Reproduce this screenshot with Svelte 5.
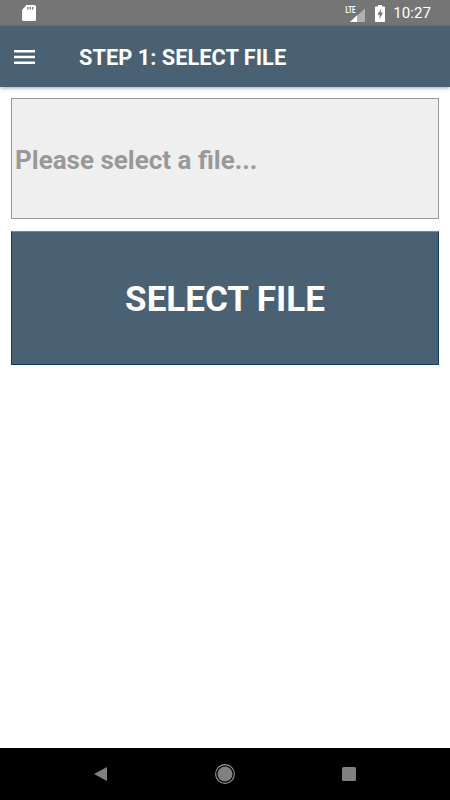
<script>
  let title = 'STEP 1: SELECT FILE';
  let placeholder = 'Please select a file...';
  let buttonLabel = 'SELECT FILE';
</script>

<div class="screen">
  <div class="status-bar">
    <svg width="14" height="16" viewBox="0 0 14 16">
      <path d="M4.5 0H12.5a1.5 1.5 0 0 1 1.5 1.5v13a1.5 1.5 0 0 1-1.500 1.500H1.500A1.500 1.500 0 0 1 0 14.500V5z" fill="#fff" />
      <path d="M5.200 2h1.300v2.600H5.200zM7.600 2h1.300v2.600H7.600zM10 2h1.300v2.600H10z" fill="#757575" />
    </svg>
    <div class="status-right">
      <svg width="21" height="17" viewBox="0 0 21 17">
        <path d="M20 3.500V17H5z" fill="#b0b0b0" />
        <path d="M12 10.200V17H5z" fill="#fff" />
        <text x="0.500" y="7.500" class="lte" textLength="10" lengthAdjust="spacingAndGlyphs">LTE</text>
      </svg>
      <svg class="battery" width="10" height="17" viewBox="0 0 10 17">
        <path d="M3 0h4v1.500h2.200a.8.8 0 0 1 .8.8v13.900a.8.8 0 0 1-.8.8H.8a.8.8 0 0 1-.8-.8V2.300a.8.8 0 0 1 .8-.8H3z" fill="#fff" />
        <path d="M6.200 3.500 2.400 9.800h2.200v4.200L8 7.600H5.600z" fill="#757575" />
      </svg>
      <span class="clock">10:27</span>
    </div>
  </div>

  <header class="toolbar">
    <svg width="21" height="14" viewBox="0 0 21 14">
      <path d="M0 1.300h21M0 7h21M0 12.700h21" stroke="#fff" stroke-width="2.500" />
    </svg>
    <h1>{title}</h1>
  </header>

  <main class="content">
    <div class="file-box"><span>{placeholder}</span></div>
    <button class="select-btn"><span>{buttonLabel}</span></button>
  </main>

  <nav class="nav-bar">
    <svg width="13" height="14" viewBox="0 0 13 14"><path d="M13 0V14L0 7z" fill="#808080" /></svg>
    <svg width="20" height="20" viewBox="0 0 20 20">
      <circle cx="10" cy="10" r="9.400" fill="none" stroke="#969696" stroke-width="1.100" />
      <circle cx="10" cy="10" r="7.500" fill="#808080" />
    </svg>
    <svg width="14" height="14" viewBox="0 0 14 14"><rect width="14" height="14" rx="1.500" fill="#808080" /></svg>
  </nav>
</div>

<style>
  :global(body) {
    margin: 0;
    background: #fff;
  }

  .screen {
    width: 450px;
    height: 800px;
    display: flex;
    flex-direction: column;
    font-family: Roboto, 'Liberation Sans', sans-serif;
  }

  .status-bar {
    height: 26px;
    flex: none;
    background: #757575;
    display: flex;
    justify-content: space-between;
    align-items: center;
    padding: 0 19px 0 22px;
  }

  .status-right {
    display: flex;
    align-items: center;
  }

  .lte {
    font-family: Roboto, sans-serif;
    font-size: 9px;
    font-weight: 700;
    fill: #fff;
  }

  .battery {
    margin-left: 9px;
  }

  .clock {
    margin-left: 8px;
    color: #fff;
    font-size: 15.200px;
    line-height: 20px;
  }

  .toolbar {
    height: 61px;
    flex: none;
    background: #4a6073;
    display: flex;
    align-items: center;
    padding-left: 14px;
    box-shadow: 0 1px 4px rgba(0, 0, 0, 0.35);
    position: relative;
  }

  h1 {
    margin: 2px 0 0 44px;
    color: #fff;
    font-size: 21.800px;
    font-weight: 700;
  }

  .content {
    flex: 1;
    display: flex;
    flex-direction: column;
    gap: 12px;
    padding: 11px 11px 0;
  }

  .file-box {
    box-sizing: border-box;
    height: 121px;
    display: flex;
    align-items: center;
    padding: 3px 0 0 3px;
    background: #efefef;
    border: 1px solid #999;
    color: #999;
    font-size: 26px;
    font-weight: 700;
  }

  .select-btn {
    box-sizing: border-box;
    height: 134px;
    width: 100%;
    padding: 3px 0 0;
    background: #4a6073;
    border: 1px solid #0d3c6b;
    border-top-color: #7b8b99;
    border-radius: 0;
    color: #fff;
    font-family: inherit;
    font-size: 35px;
    font-weight: 700;
  }

  .nav-bar {
    height: 52px;
    flex: none;
    background: #000;
    display: flex;
    align-items: center;
    justify-content: space-between;
    padding: 0 94px;
  }
</style>
